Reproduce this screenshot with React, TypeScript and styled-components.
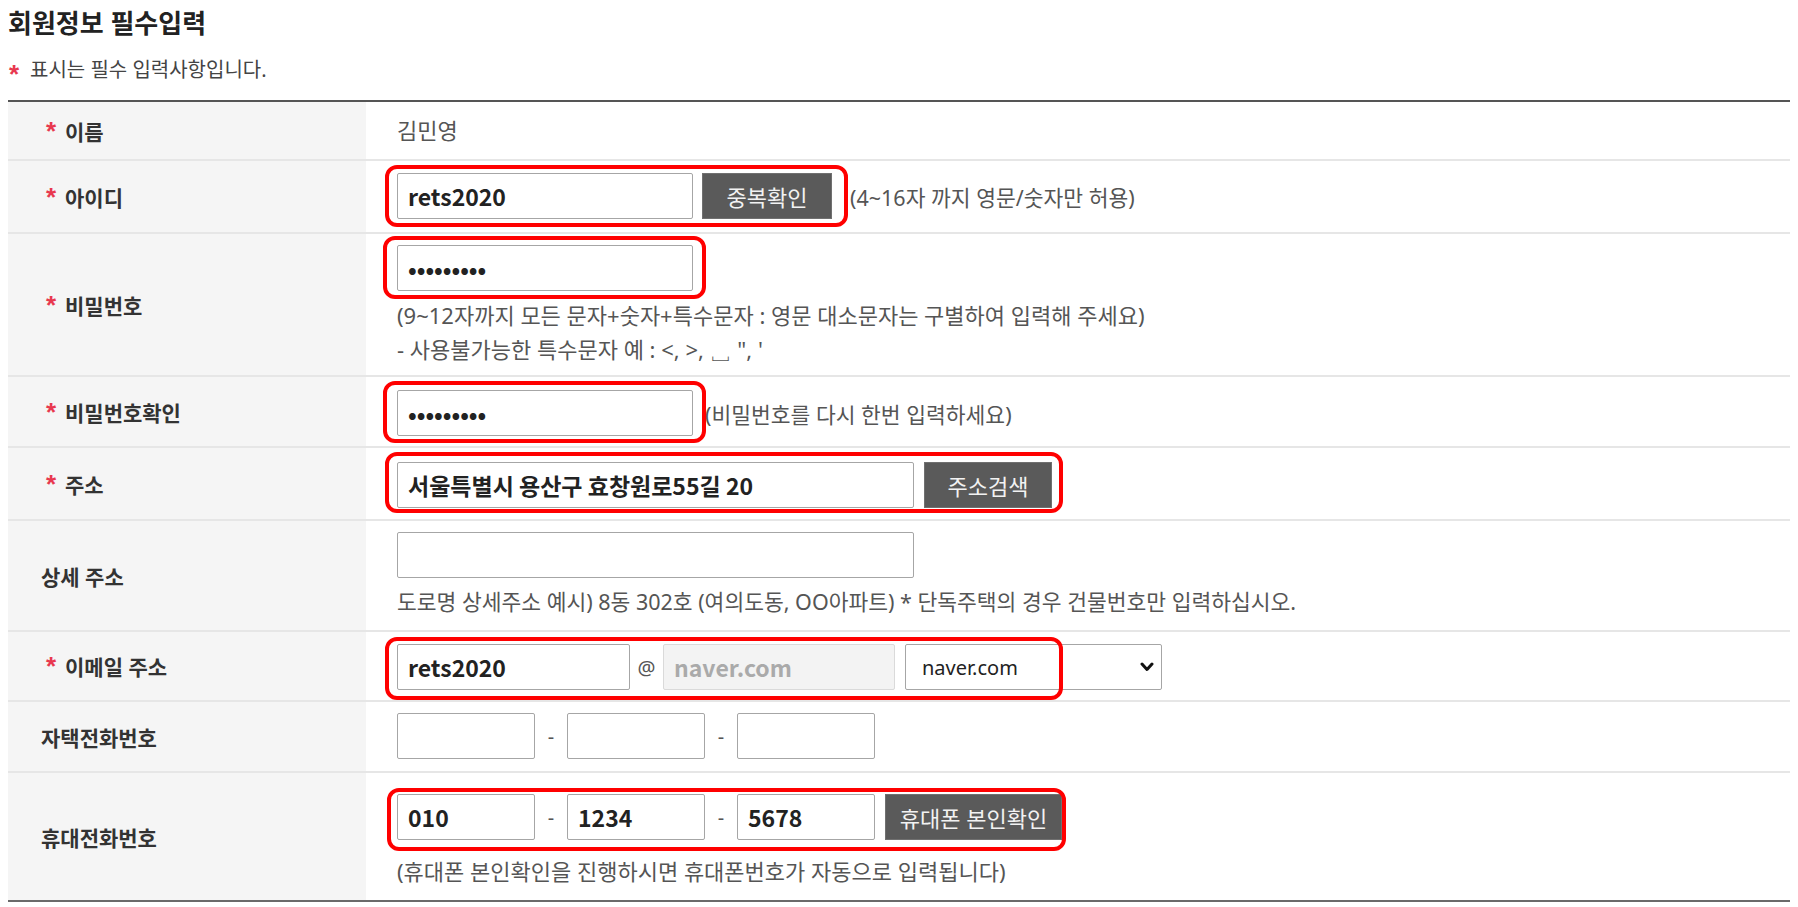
import React from 'react';
import styled, { createGlobalStyle } from 'styled-components';

const GlobalStyle = createGlobalStyle`
  * {
    box-sizing: border-box;
  }
  body {
    margin: 8px;
    background: #fff;
    font-family: 'Noto Sans', 'Noto Sans CJK KR', sans-serif;
    color: #333;
  }
`;

const Page = styled.div`
  width: 1782px;
`;

const Title = styled.h2`
  margin: 0;
  font-size: 26px;
  line-height: 30px;
  font-weight: 700;
  color: #222;
`;

const Notice = styled.p`
  margin: 18px 0 16px;
  font-size: 20px;
  line-height: 28px;
  color: #444;
`;

const Star = styled.span<{ $lead: number; $w: number }>`
  display: inline-block;
  width: ${(p) => p.$w}px;
  margin-left: ${(p) => p.$lead}px;
  color: #e8384f;
  font-weight: 700;
  font-size: 26px;
  line-height: 20px;
  font-family: 'Liberation Sans', sans-serif;
  vertical-align: -6px;
`;

const Table = styled.div`
  border-top: 2px solid #555;
  border-bottom: 2px solid #6a6a6a;
`;

const Row = styled.div`
  display: grid;
  grid-template-columns: 358px 1fr;
  border-bottom: 2px solid #e6e6e6;
  &:last-child {
    border-bottom: none;
  }
`;

const Label = styled.div`
  display: flex;
  align-items: center;
  padding-left: 33px;
  background: #f5f5f5;
  font-size: 21px;
  font-weight: 600;
  color: #333;
`;

const Cell = styled.div<{ $pad: string }>`
  display: flex;
  flex-direction: column;
  align-items: flex-start;
  padding: ${(p) => p.$pad};
  padding-left: 31px;
`;

const Plain = styled.span`
  font-size: 22px;
  line-height: 34px;
  color: #555;
`;

const Line = styled.div`
  display: flex;
  align-items: center;
`;

const Highlight = styled.div<{ $inset: string }>`
  position: relative;
  display: flex;
  align-items: center;
  &::after {
    content: '';
    position: absolute;
    inset: ${(p) => p.$inset};
    border: 4px solid #ff0000;
    border-radius: 12px;
    pointer-events: none;
    z-index: 2;
  }
`;

const Field = styled.input<{ $w: number; $muted?: boolean }>`
  width: ${(p) => p.$w}px;
  height: 46px;
  padding: 0 10px;
  border: 1px solid ${(p) => (p.$muted ? '#dadada' : '#a6a6a6')};
  border-radius: 2px;
  background: ${(p) => (p.$muted ? '#f3f3f3' : '#fff')};
  font-family: 'Noto Sans CJK KR', 'Noto Sans', sans-serif;
  font-size: 23px;
  font-weight: 600;
  color: ${(p) => (p.$muted ? '#aaa' : '#222')};
  outline: none;
`;

const GrayButton = styled.button<{ $w: number; $gap?: number }>`
  width: ${(p) => p.$w}px;
  height: 46px;
  margin-left: ${(p) => p.$gap ?? 10}px;
  padding: 0;
  border: 1px solid #707070;
  background: #5a5a5a;
  color: #f2f2f2;
  font-family: inherit;
  font-size: 22px;
  cursor: pointer;
`;

const Sep = styled.span<{ $w: number }>`
  width: ${(p) => p.$w}px;
  text-align: center;
  font-size: 20px;
  color: #555;
`;

const Help = styled.p<{ $mt?: number; $size?: number }>`
  margin: ${(p) => p.$mt ?? 7}px 0 0;
  font-size: ${(p) => p.$size ?? 22}px;
  line-height: 34px;
  color: #555;
`;

const SideHelp = styled.span<{ $gap: number }>`
  margin-left: ${(p) => p.$gap}px;
  font-size: 21.5px;
  color: #555;
`;

const SelectWrap = styled.div`
  position: relative;
  margin-left: 10px;
`;

const Select = styled.select`
  appearance: none;
  width: 257px;
  height: 46px;
  padding: 0 16px;
  border: 1px solid #a6a6a6;
  border-radius: 2px;
  background: #fff;
  font-family: inherit;
  font-size: 20px;
  color: #222;
  outline: none;
`;

const Chevron = styled.svg`
  position: absolute;
  right: 8px;
  top: 50%;
  margin-top: -5px;
  pointer-events: none;
`;

const Required = () => (
  <Star $lead={5} $w={19}>
    *
  </Star>
);

const PhoneFields = ({ values }: { values: string[] }) => (
  <>
    <Field $w={138} defaultValue={values[0]} />
    <Sep $w={32}>-</Sep>
    <Field $w={138} defaultValue={values[1]} />
    <Sep $w={32}>-</Sep>
    <Field $w={138} defaultValue={values[2]} />
  </>
);

export default function App() {
  return (
    <Page>
      <GlobalStyle />
      <Title>회원정보 필수입력</Title>
      <Notice>
        <Star $lead={1} $w={21}>
          *
        </Star>
        표시는 필수 입력사항입니다.
      </Notice>

      <Table>
        <Row>
          <Label>
            <Required />
            이름
          </Label>
          <Cell $pad="11px 0 12px">
            <Plain>김민영</Plain>
          </Cell>
        </Row>

        <Row>
          <Label>
            <Required />
            아이디
          </Label>
          <Cell $pad="12px 0 13px">
            <Line>
              <Highlight $inset="-8px -16px -8px -12px">
                <Field $w={296} defaultValue="rets2020" />
                <GrayButton $w={130} $gap={9}>
                  중복확인
                </GrayButton>
              </Highlight>
              <SideHelp $gap={18}>(4~16자 까지 영문/숫자만 허용)</SideHelp>
            </Line>
          </Cell>
        </Row>

        <Row>
          <Label>
            <Required />
            비밀번호
          </Label>
          <Cell $pad="11px 0 9px">
            <Highlight $inset="-9px -13px -8px -14px">
              <Field $w={296} type="password" defaultValue="123456789" />
            </Highlight>
            <Help>
              (9~12자까지 모든 문자+숫자+특수문자 : 영문 대소문자는 구별하여 입력해 주세요)
              <br />- 사용불가능한 특수문자 예 : &lt;, &gt;, ␣ ", '
            </Help>
          </Cell>
        </Row>

        <Row>
          <Label>
            <Required />
            비밀번호확인
          </Label>
          <Cell $pad="13px 0 10px">
            <Line>
              <Highlight $inset="-9px -13px -7px -14px">
                <Field $w={296} type="password" defaultValue="123456789" />
              </Highlight>
              <SideHelp $gap={12}>(비밀번호를 다시 한번 입력하세요)</SideHelp>
            </Line>
          </Cell>
        </Row>

        <Row>
          <Label>
            <Required />
            주소
          </Label>
          <Cell $pad="14px 0 11px">
            <Highlight $inset="-10px -11px -5px -12px">
              <Field $w={517} defaultValue="서울특별시 용산구 효창원로55길 20" />
              <GrayButton $w={128}>주소검색</GrayButton>
            </Highlight>
          </Cell>
        </Row>

        <Row>
          <Label>상세 주소</Label>
          <Cell $pad="11px 0 11px">
            <Field $w={517} />
            <Help $size={21.5}>
              도로명 상세주소 예시) 8동 302호 (여의도동, OO아파트) * 단독주택의 경우 건물번호만 입력하십시오.
            </Help>
          </Cell>
        </Row>

        <Row>
          <Label>
            <Required />
            이메일 주소
          </Label>
          <Cell $pad="12px 0 10px">
            <Highlight $inset="-7px 99px -10px -12px">
              <Field $w={233} defaultValue="rets2020" />
              <Sep $w={33}>@</Sep>
              <Field $w={232} $muted readOnly defaultValue="naver.com" />
              <SelectWrap>
                <Select defaultValue="naver.com">
                  <option value="naver.com">naver.com</option>
                  <option value="daum.net">daum.net</option>
                  <option value="gmail.com">gmail.com</option>
                  <option value="direct">직접입력</option>
                </Select>
                <Chevron width="14" height="10" viewBox="0 0 14 10">
                  <polyline
                    points="2,2 7,7.5 12,2"
                    fill="none"
                    stroke="#111"
                    strokeWidth="3"
                    strokeLinecap="round"
                    strokeLinejoin="round"
                  />
                </Chevron>
              </SelectWrap>
            </Highlight>
          </Cell>
        </Row>

        <Row>
          <Label>자택전화번호</Label>
          <Cell $pad="11px 0 12px">
            <Line>
              <PhoneFields values={['', '', '']} />
            </Line>
          </Cell>
        </Row>

        <Row>
          <Label>휴대전화번호</Label>
          <Cell $pad="21px 0 12px">
            <Highlight $inset="-6px -4px -11px -10px">
              <PhoneFields values={['010', '1234', '5678']} />
              <GrayButton $w={177}>휴대폰 본인확인</GrayButton>
            </Highlight>
            <Help $mt={14}>(휴대폰 본인확인을 진행하시면 휴대폰번호가 자동으로 입력됩니다)</Help>
          </Cell>
        </Row>
      </Table>
    </Page>
  );
}
